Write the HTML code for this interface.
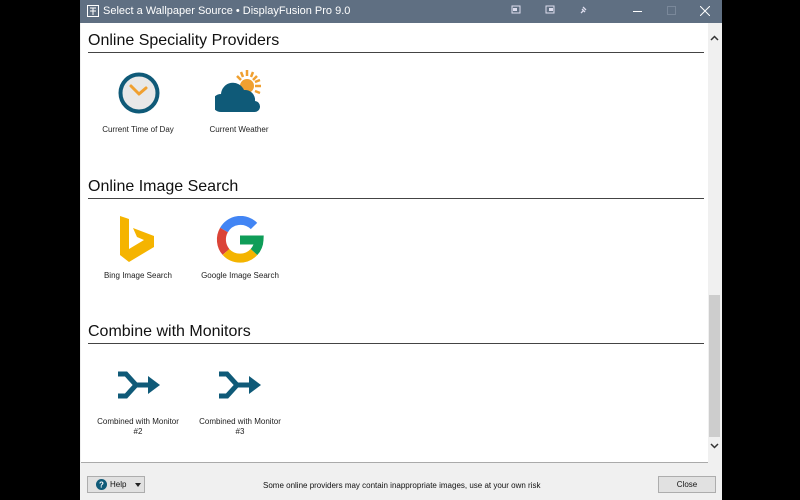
<!DOCTYPE html>
<html><head><meta charset="utf-8"><style>
*{margin:0;padding:0;box-sizing:border-box}
body{width:800px;height:500px;background:#000;position:relative;overflow:hidden;font-family:"Liberation Sans",sans-serif}
#win{position:absolute;left:80px;top:0;width:642px;height:500px;background:#f0f0f0}
#title{position:absolute;left:0;top:0;width:642px;height:23px;background:#5f6f82;color:#fff;font-size:11px}
#content{position:absolute;left:1px;top:23px;width:640px;height:440px;background:#fff;border-bottom:1px solid #aaa}
.h{position:absolute;left:7px;font-size:16px;color:#111}
.line{position:absolute;left:7px;width:616px;height:1px;background:#444}
.lbl{position:absolute;font-size:8px;color:#222;text-align:center;width:90px;line-height:10px}
.ic{position:absolute}
#sb{position:absolute;left:627px;top:0;width:13px;height:440px;background:#f0f0f0}
#thumb{position:absolute;left:1px;top:272px;width:11px;height:142px;background:#cdcdcd}
.btn{position:absolute;background:#e1e1e1;border:1px solid #adadad;font-size:8px;color:#111}
</style></head><body>
<div id="win">
<div id="title">
<svg style="position:absolute;left:7px;top:5px" width="12" height="12"><rect x="0.5" y="0.5" width="11" height="11" fill="none" stroke="#fff"/><path d="M3 3h6M3 6h6M6 3v7" stroke="#fff"/></svg>
<span style="position:absolute;left:23px;top:5px">Select a Wallpaper Source • DisplayFusion Pro 9.0</span>
<svg style="position:absolute;left:430px;top:4px" width="12" height="12"><rect x="2" y="2" width="8" height="7" fill="none" stroke="#dde" /><rect x="3" y="4" width="4" height="3" fill="#dde"/></svg>
<svg style="position:absolute;left:464px;top:4px" width="12" height="12"><rect x="2" y="2" width="8" height="7" fill="none" stroke="#dde"/><rect x="5" y="4" width="4" height="3" fill="#dde"/></svg>
<svg style="position:absolute;left:497px;top:4px" width="12" height="12"><path d="M4 9l3-3M6 3l3 3M5 5l3 3" stroke="#dde" stroke-width="1.3"/></svg>
<div style="position:absolute;left:553px;top:11px;width:9px;height:1px;background:#fff"></div>
<div style="position:absolute;left:587px;top:6px;width:9px;height:9px;border:1px solid #7a889a"></div>
<svg style="position:absolute;left:620px;top:6px" width="10" height="10"><path d="M0 0L10 10M10 0L0 10" stroke="#fff"/></svg>
</div>
<div id="content">
<div class="h" style="top:9px">Online Speciality Providers</div>
<div class="line" style="top:29px"></div>
<svg class="ic" style="left:37px;top:49px" width="42" height="42"><circle cx="21" cy="21" r="18.5" fill="#e8e8e8" stroke="#0f5a78" stroke-width="4"/><path d="M21 22L13 14M21 22L28 16" stroke="#f0a030" stroke-width="3" stroke-linecap="round"/></svg>
<div class="lbl" style="left:12px;top:102px">Current Time of Day</div>
<svg class="ic" style="left:134px;top:45px" width="48" height="46"><g stroke="#f0a030" stroke-width="2.5"><path d="M32 2v6M42 8l-4 4M46 18h-6M22 8l4 4M26 4l2 5M38 4l-2 5M45 12l-5 2M45 25l-5-2"/></g><circle cx="32" cy="18" r="7" fill="#f0a030"/><path d="M6 44a9 9 0 0 1 0-18a12 12 0 0 1 23-4a10 10 0 0 1 11 11a5.5 5.5 0 0 1-1 11z" fill="#0f5a78"/></svg>
<div class="lbl" style="left:113px;top:102px">Current Weather</div>

<div class="h" style="top:155px">Online Image Search</div>
<div class="line" style="top:175px"></div>
<svg class="ic" style="left:38px;top:193px" width="40" height="46"><path d="M1 0l9 3v30l15-9-7-3-4-9 21 8v11L10 46 1 39z" fill="#f5b400"/></svg>
<div class="lbl" style="left:12px;top:248px">Bing Image Search</div>
<svg class="ic" style="left:135px;top:193px" width="48" height="48" viewBox="0 0 48 48"><g fill="none" stroke-width="9"><path d="M38 10A19 19 0 0 0 8 14" stroke="#4285f4"/><path d="M8 14A19 19 0 0 0 10 36" stroke="#db4437"/><path d="M10 36A19 19 0 0 0 38 36" stroke="#f4b400"/><path d="M38 36A19 19 0 0 0 43 24H24" stroke="#0f9d58"/></g></svg>
<div class="lbl" style="left:114px;top:248px">Google Image Search</div>

<div class="h" style="top:300px">Combine with Monitors</div>
<div class="line" style="top:320px"></div>
<svg class="ic" style="left:36px;top:348px" width="44" height="28"><path d="M1 3h8l10 11-10 11H1M19 14h14" fill="none" stroke="#0f5a78" stroke-width="5"/><path d="M31 5l12 9-12 9z" fill="#0f5a78"/></svg>
<div class="lbl" style="left:12px;top:394px">Combined with Monitor<br>#2</div>
<svg class="ic" style="left:137px;top:348px" width="44" height="28"><path d="M1 3h8l10 11-10 11H1M19 14h14" fill="none" stroke="#0f5a78" stroke-width="5"/><path d="M31 5l12 9-12 9z" fill="#0f5a78"/></svg>
<div class="lbl" style="left:114px;top:394px">Combined with Monitor<br>#3</div>

<div id="sb"><div id="thumb"></div>
<svg style="position:absolute;left:2px;top:12px" width="9" height="6"><path d="M1 5l3.5-3.5L8 5" fill="none" stroke="#333" stroke-width="1.5"/></svg>
<svg style="position:absolute;left:2px;top:420px" width="9" height="6"><path d="M1 1l3.5 3.5L8 1" fill="none" stroke="#333" stroke-width="1.5"/></svg>
</div>
</div>
<div class="btn" style="left:7px;top:476px;width:58px;height:17px">
<svg style="position:absolute;left:8px;top:2px" width="11" height="11"><circle cx="5.5" cy="5.5" r="5.5" fill="#0f5a78"/><text x="5.5" y="8.5" font-size="8" font-weight="bold" fill="#fff" text-anchor="middle" font-family="Liberation Sans">?</text></svg>
<span style="position:absolute;left:22px;top:3px">Help</span>
<svg style="position:absolute;left:47px;top:6px" width="6" height="4"><path d="M0 0h6L3 4z" fill="#222"/></svg>
</div>
<div style="position:absolute;left:183px;top:481px;font-size:8px;color:#111">Some online providers may contain inappropriate images, use at your own risk</div>
<div class="btn" style="left:578px;top:476px;width:58px;height:17px;text-align:center;line-height:15px">Close</div>
</div>
</body></html>
